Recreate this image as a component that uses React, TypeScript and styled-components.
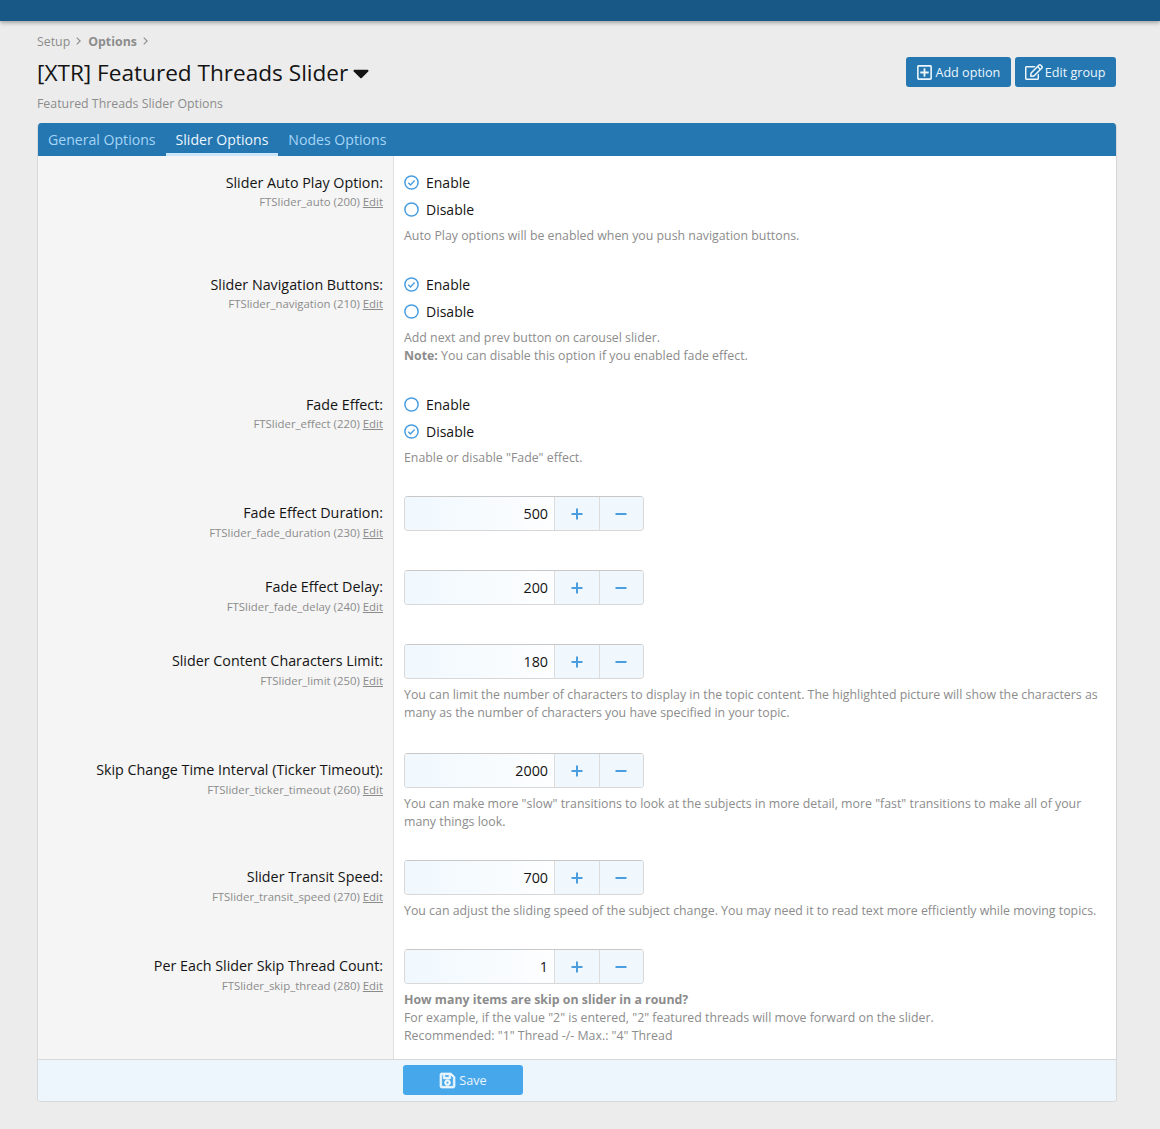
import React from 'react';
import styled, { createGlobalStyle } from 'styled-components';
import { FaRegPlusSquare, FaRegEdit, FaRegSave, FaCaretDown } from 'react-icons/fa';

const GlobalStyle = createGlobalStyle`
  html, body {
    margin: 0;
    padding: 0;
    background: #ececec;
  }
  body {
    font-family: 'Open Sans', 'Noto Sans', 'Liberation Sans', sans-serif;
    color: #141414;
    font-size: 14px;
  }
`;

const CheckCircle: React.FC<{ checked: boolean }> = ({ checked }) => (
  <RadioSvg viewBox="0 0 15 15">
    <circle cx="7.5" cy="7.5" r="6.6" fill="none" stroke="#4a9ee0" strokeWidth="1.5" />
    {checked && (
      <path d="M4.3 7.7l2.2 2.2 4.1-4.3" fill="none" stroke="#4a9ee0" strokeWidth="1.4" />
    )}
  </RadioSvg>
);

const Chevron = () => (
  <ChevronSvg viewBox="0 0 5 8">
    <path d="M.7.6L4.2 4 .7 7.4" fill="none" stroke="#8c8c8c" strokeWidth="1.1" />
  </ChevronSvg>
);

type Radio = { enabled: boolean };
type OptionData = {
  label: string;
  code: string;
  radio?: Radio;
  value?: string;
  hint?: React.ReactNode;
  bottom: number;
};

const options: OptionData[] = [
  {
    label: 'Slider Auto Play Option:',
    code: 'FTSlider_auto (200)',
    radio: { enabled: true },
    hint: 'Auto Play options will be enabled when you push navigation buttons.',
    bottom: 13,
  },
  {
    label: 'Slider Navigation Buttons:',
    code: 'FTSlider_navigation (210)',
    radio: { enabled: true },
    hint: (
      <>
        Add next and prev button on carousel slider.
        <br />
        <b>Note:</b> You can disable this option if you enabled fade effect.
      </>
    ),
    bottom: 13,
  },
  {
    label: 'Fade Effect:',
    code: 'FTSlider_effect (220)',
    radio: { enabled: false },
    hint: 'Enable or disable "Fade" effect.',
    bottom: 13,
  },
  { label: 'Fade Effect Duration:', code: 'FTSlider_fade_duration (230)', value: '500', bottom: 23 },
  { label: 'Fade Effect Delay:', code: 'FTSlider_fade_delay (240)', value: '200', bottom: 23 },
  {
    label: 'Slider Content Characters Limit:',
    code: 'FTSlider_limit (250)',
    value: '180',
    hint: 'You can limit the number of characters to display in the topic content. The highlighted picture will show the characters as many as the number of characters you have specified in your topic.',
    bottom: 15,
  },
  {
    label: 'Skip Change Time Interval (Ticker Timeout):',
    code: 'FTSlider_ticker_timeout (260)',
    value: '2000',
    hint: 'You can make more "slow" transitions to look at the subjects in more detail, more "fast" transitions to make all of your many things look.',
    bottom: 13,
  },
  {
    label: 'Slider Transit Speed:',
    code: 'FTSlider_transit_speed (270)',
    value: '700',
    hint: 'You can adjust the sliding speed of the subject change. You may need it to read text more efficiently while moving topics.',
    bottom: 13,
  },
  {
    label: 'Per Each Slider Skip Thread Count:',
    code: 'FTSlider_skip_thread (280)',
    value: '1',
    hint: (
      <>
        <b>How many items are skip on slider in a round?</b>
        <br />
        For example, if the value "2" is entered, "2" featured threads will move forward on the slider.
        <br />
        Recommended: "1" Thread -/- Max.: "4" Thread
      </>
    ),
    bottom: 14,
  },
];

const Option: React.FC<{ option: OptionData }> = ({ option }) => {
  const { label, code, radio, value, hint, bottom } = option;
  return (
    <Row>
      <LabelCell $radio={!!radio}>
        <Label>{label}</Label>
        <Code $radio={!!radio}>
          {code} <EditLink>Edit</EditLink>
        </Code>
      </LabelCell>
      <ControlCell $radio={!!radio} $bottom={bottom}>
        {radio && (
          <RadioList>
            <RadioRow>
              <CheckCircle checked={radio.enabled} />
              Enable
            </RadioRow>
            <RadioRow>
              <CheckCircle checked={!radio.enabled} />
              Disable
            </RadioRow>
          </RadioList>
        )}
        {value && (
          <Spinner>
            <SpinnerValue>{value}</SpinnerValue>
            <SpinnerButton>
              <svg width="12" height="12" viewBox="0 0 12 12">
                <path d="M6 .5v11M.5 6h11" stroke="#4a9ee0" strokeWidth="2" />
              </svg>
            </SpinnerButton>
            <SpinnerButton>
              <svg width="12" height="12" viewBox="0 0 12 12">
                <path d="M.5 6h11" stroke="#4a9ee0" strokeWidth="2" />
              </svg>
            </SpinnerButton>
          </Spinner>
        )}
        {hint && <Hint $radio={!!radio}>{hint}</Hint>}
      </ControlCell>
    </Row>
  );
};

export default function App() {
  return (
    <Page>
      <GlobalStyle />
      <TopBar />
      <Content>
        <Breadcrumbs>
          <span>Setup</span>
          <Chevron />
          <b>Options</b>
          <Chevron />
        </Breadcrumbs>
        <Header>
          <div>
            <Title>
              [XTR] Featured Threads Slider
              <FaCaretDown size={26} />
            </Title>
            <Subtitle>Featured Threads Slider Options</Subtitle>
          </div>
          <Actions>
            <ActionButton>
              <FaRegPlusSquare size={17} />
              Add option
            </ActionButton>
            <ActionButton>
              <FaRegEdit size={18} />
              Edit group
            </ActionButton>
          </Actions>
        </Header>
        <Panel>
          <Tabs>
            <Tab>General Options</Tab>
            <Tab $active>Slider Options</Tab>
            <Tab>Nodes Options</Tab>
          </Tabs>
          <Rows>
            {options.map((option) => (
              <Option key={option.code} option={option} />
            ))}
          </Rows>
          <Footer>
            <SaveButton>
              <FaRegSave size={17} stroke="currentColor" strokeWidth={24} />
              Save
            </SaveButton>
          </Footer>
        </Panel>
      </Content>
    </Page>
  );
}

const Page = styled.div`
  min-height: 1129px;
`;

const TopBar = styled.div`
  height: 21px;
  background: #185886;
  box-shadow: 0 2px 4px rgba(0, 0, 0, 0.3);
`;

const Content = styled.div`
  padding: 0 43px 27px 37px;
`;

const Breadcrumbs = styled.div`
  display: flex;
  align-items: center;
  gap: 6px;
  height: 20px;
  margin-top: 10px;
  font-size: 12.35px;
  color: #8c8c8c;

  b {
    font-weight: 700;
    margin-left: 1px;
  }
`;

const ChevronSvg = styled.svg`
  width: 5px;
  height: 8px;
  flex: none;
`;

const Header = styled.div`
  display: flex;
  justify-content: space-between;
  align-items: flex-start;
  margin-top: 6px;
`;

const Title = styled.h1`
  display: flex;
  align-items: center;
  margin: 0;
  font-size: 22.6px;
  line-height: 32px;
  font-weight: 400;
  color: #141414;
`;

const Subtitle = styled.div`
  margin-top: 6px;
  font-size: 12.35px;
  line-height: 18px;
  color: #8c8c8c;
`;

const Actions = styled.div`
  display: flex;
  gap: 4px;
  margin-right: 1px;
`;

const ActionButton = styled.div`
  display: flex;
  align-items: center;
  gap: 2px;
  height: 30px;
  padding: 0 10.5px 0 10px;
  box-sizing: border-box;
  border-radius: 3px;
  background: #2577b1;
  color: #ebf6fd;
  font-size: 12.6px;
`;

const Panel = styled.div`
  margin-top: 10px;
  border-radius: 4px;
  border: 1px solid #d8d8d8;
  border-top: none;
  overflow: hidden;
  background: #fff;
`;

const Tabs = styled.div`
  display: flex;
  height: 33px;
  background: #2577b1;
  margin: 0 -1px;
  padding-left: 1px;
`;

const Tab = styled.div<{ $active?: boolean }>`
  padding: 0 10px;
  line-height: 33px;
  font-size: 14.1px;
  box-sizing: border-box;
  color: ${({ $active }) => ($active ? '#ebf6fd' : '#a5d5f7')};
  border-bottom: 3px solid ${({ $active }) => ($active ? '#cbe6fa' : 'transparent')};
`;

const Rows = styled.div`
  display: flex;
  flex-direction: column;
  background: linear-gradient(to right, #f5f5f5 355px, #e0e0e0 355px, #e0e0e0 356px, #fff 356px);
`;

const Row = styled.div`
  display: grid;
  grid-template-columns: 356px 1fr;
`;

const LabelCell = styled.div<{ $radio: boolean }>`
  padding: ${({ $radio }) => ($radio ? '15px' : '21px')} 11px 0 0;
  text-align: right;
`;

const Label = styled.div`
  font-size: 14.3px;
  line-height: 24px;
  color: #141414;
`;

const Code = styled.div<{ $radio: boolean }>`
  margin-top: ${({ $radio }) => ($radio ? '0' : '1px')};
  font-size: 11.4px;
  line-height: 14px;
  color: #8c8c8c;
`;

const EditLink = styled.span`
  text-decoration: underline;
`;

const ControlCell = styled.div<{ $radio: boolean; $bottom: number }>`
  padding: ${({ $radio }) => ($radio ? '13px' : '16px')} 10px ${({ $bottom }) => $bottom}px 10px;
`;

const RadioList = styled.div`
  display: flex;
  flex-direction: column;
`;

const RadioRow = styled.div`
  display: flex;
  align-items: center;
  gap: 7px;
  height: 27px;
  font-size: 14px;
`;

const RadioSvg = styled.svg`
  width: 15px;
  height: 15px;
  flex: none;
`;

const Spinner = styled.div`
  display: flex;
  width: 240px;
  height: 35px;
  box-sizing: border-box;
  border: 1px solid #d8d8d8;
  border-top-color: #c8c8c8;
  border-radius: 4px;
  overflow: hidden;
`;

const SpinnerValue = styled.div`
  flex: none;
  width: 149px;
  box-sizing: border-box;
  padding-right: 6px;
  text-align: right;
  line-height: 33px;
  font-size: 14.3px;
  background: linear-gradient(to right, #f0f8fe, #fdfeff);
`;

const SpinnerButton = styled.div`
  display: flex;
  flex: 1;
  align-items: center;
  justify-content: center;
  background: #f0f7fd;
  border-left: 1px solid #dcdcdc;
`;

const Hint = styled.div<{ $radio: boolean }>`
  margin-top: ${({ $radio }) => ($radio ? '4px' : '7px')};
  font-size: 12.35px;
  line-height: 18px;
  color: #8c8c8c;
`;

const Footer = styled.div`
  display: flex;
  height: 42px;
  padding: 5px 0 0 365px;
  box-sizing: border-box;
  background: #edf6fd;
  border-top: 1px solid #d8d8d8;
`;

const SaveButton = styled.div`
  display: flex;
  align-items: center;
  justify-content: center;
  gap: 3px;
  width: 120px;
  height: 30px;
  border-radius: 3px;
  background: #47a7eb;
  color: #ebf6fd;
  font-size: 12.6px;
`;
